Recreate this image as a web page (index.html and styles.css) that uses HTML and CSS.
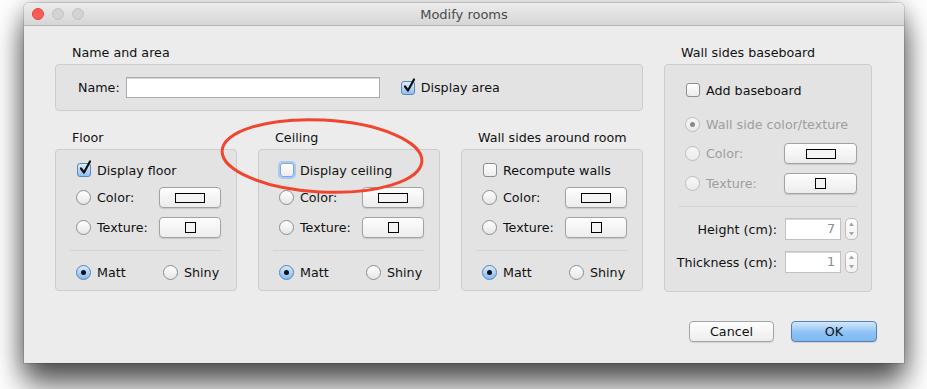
FILE: index.html
```html
<!DOCTYPE html>
<html lang="en">
  <head>
    <meta charset="UTF-8" />
    <title>Modify rooms</title>
    <link rel="stylesheet" href="styles.css">
  </head>
  <body>
    <div class="window">
      <div class="titlebar">
        <div class="lights">
          <span class="light close"></span>
          <span class="light"></span>
          <span class="light"></span>
        </div>
        <div class="title">Modify rooms</div>
        <div></div>
      </div>

      <div class="content">
        <div class="main">
          <div class="left">
            <div class="group">
              <div class="group-title">Name and area</div>
              <div class="box name-box">
                <span class="field-label">Name:</span>
                <div class="text-input name-input"></div>
                <span class="check on">
                  <svg viewBox="0 0 14 16" width="14" height="16"><path d="M3 8.5 L6 12.5 L12 1.5" fill="none" stroke="#111" stroke-width="2.2" stroke-linecap="round" stroke-linejoin="round"/></svg>
                </span>
                <span class="check-text">Display area</span>
              </div>
            </div>

            <div class="trio">
              <div class="group">
                <div class="group-title">Floor</div>
                <div class="box panel">
                  <div class="check-row">
                    <span class="check on">
                      <svg viewBox="0 0 14 16" width="14" height="16"><path d="M3 8.5 L6 12.5 L12 1.5" fill="none" stroke="#111" stroke-width="2.2" stroke-linecap="round" stroke-linejoin="round"/></svg>
                    </span>
                    <span class="check-text">Display floor</span>
                  </div>
                  <div class="option-row">
                    <div class="radio-label"><span class="radio"></span>Color:</div>
                    <div class="swatch"><span class="swatch-rect"></span></div>
                  </div>
                  <div class="option-row">
                    <div class="radio-label"><span class="radio"></span>Texture:</div>
                    <div class="swatch"><span class="swatch-square"></span></div>
                  </div>
                  <div class="separator"></div>
                  <div class="finish-row">
                    <div class="radio-label"><span class="radio on"></span>Matt</div>
                    <div class="radio-label shiny"><span class="radio"></span>Shiny</div>
                  </div>
                </div>
              </div>

              <div class="group">
                <div class="group-title">Ceiling</div>
                <div class="box panel">
                  <div class="check-row">
                    <span class="check focus"></span>
                    <span class="check-text">Display ceiling</span>
                  </div>
                  <div class="option-row">
                    <div class="radio-label"><span class="radio"></span>Color:</div>
                    <div class="swatch"><span class="swatch-rect"></span></div>
                  </div>
                  <div class="option-row">
                    <div class="radio-label"><span class="radio"></span>Texture:</div>
                    <div class="swatch"><span class="swatch-square"></span></div>
                  </div>
                  <div class="separator"></div>
                  <div class="finish-row">
                    <div class="radio-label"><span class="radio on"></span>Matt</div>
                    <div class="radio-label shiny"><span class="radio"></span>Shiny</div>
                  </div>
                </div>
              </div>

              <div class="group">
                <div class="group-title">Wall sides around room</div>
                <div class="box panel">
                  <div class="check-row">
                    <span class="check"></span>
                    <span class="check-text">Recompute walls</span>
                  </div>
                  <div class="option-row">
                    <div class="radio-label"><span class="radio"></span>Color:</div>
                    <div class="swatch"><span class="swatch-rect"></span></div>
                  </div>
                  <div class="option-row">
                    <div class="radio-label"><span class="radio"></span>Texture:</div>
                    <div class="swatch"><span class="swatch-square"></span></div>
                  </div>
                  <div class="separator"></div>
                  <div class="finish-row">
                    <div class="radio-label"><span class="radio on"></span>Matt</div>
                    <div class="radio-label shiny"><span class="radio"></span>Shiny</div>
                  </div>
                </div>
              </div>
            </div>
          </div>

          <div class="group right">
            <div class="group-title">Wall sides baseboard</div>
            <div class="box baseboard">
              <div class="check-row">
                <span class="check"></span>
                <span class="check-text">Add baseboard</span>
              </div>
              <div class="radio-label disabled first"><span class="radio on"></span>Wall side color/texture</div>
              <div class="option-row wide">
                <div class="radio-label disabled"><span class="radio"></span>Color:</div>
                <div class="swatch"><span class="swatch-rect"></span></div>
              </div>
              <div class="option-row wide">
                <div class="radio-label disabled"><span class="radio"></span>Texture:</div>
                <div class="swatch"><span class="swatch-square"></span></div>
              </div>
              <div class="separator"></div>
              <div class="spin-row">
                <span class="spin-label">Height (cm):</span>
                <div class="text-input spin-input">7</div>
                <div class="stepper">
                  <svg viewBox="0 0 11 20" width="11" height="20"><path d="M3 7 L5.5 3.5 L8 7 Z M3 13 L5.5 16.5 L8 13 Z" fill="#a5a5a5"/></svg>
                </div>
              </div>
              <div class="spin-row">
                <span class="spin-label">Thickness (cm):</span>
                <div class="text-input spin-input">1</div>
                <div class="stepper">
                  <svg viewBox="0 0 11 20" width="11" height="20"><path d="M3 7 L5.5 3.5 L8 7 Z M3 13 L5.5 16.5 L8 13 Z" fill="#a5a5a5"/></svg>
                </div>
              </div>
            </div>
          </div>
        </div>

        <div class="footer">
          <button class="btn">Cancel</button>
          <button class="btn default">OK</button>
        </div>
      </div>

      <svg class="highlight" width="230" height="100" viewBox="0 0 230 100">
        <ellipse cx="115" cy="48" rx="100" ry="36" transform="rotate(3 115 48)" fill="none" stroke="#f0452f" stroke-width="3"/>
      </svg>
    </div>
  </body>
</html>
```

FILE: styles.css
```css
html,
body {
  height: 100%;
}
body {
  margin: 0;
  background: #fff;
  font-family: "DejaVu Sans", Verdana, sans-serif;
  font-size: 12.7px;
  color: #111;
  overflow: hidden;
}
.window {
  position: relative;
  margin: 3px 0 0 24px;
  width: 880px;
  height: 360px;
  background: #ececec;
  border-radius: 5px 5px 0 0;
  box-shadow: 0 22px 30px rgba(0, 0, 0, 0.6), 0 4px 24px rgba(0, 0, 0, 0.35), 0 0 0 1px rgba(0, 0, 0, 0.12);
}
.titlebar {
  height: 22px;
  display: grid;
  grid-template-columns: 1fr auto 1fr;
  align-items: center;
  background: linear-gradient(#ececec, #d6d6d6);
  border-bottom: 1px solid #b4b4b4;
  border-radius: 5px 5px 0 0;
}
.lights {
  display: flex;
  gap: 8px;
  padding-left: 8px;
}
.light {
  width: 12px;
  height: 12px;
  box-sizing: border-box;
  border-radius: 50%;
  background: #d3d3d3;
  border: 1px solid #c3c3c3;
}
.light.close {
  background: #fc5b57;
  border-color: #e2463f;
}
.title {
  color: #4b4b4b;
  font-size: 13px;
}
.content {
  padding: 19px 0 0 31px;
}
.main {
  display: flex;
  gap: 21px;
}
.left {
  width: 588px;
}
.right {
  width: 208px;
}
.group-title {
  line-height: 16px;
  margin: 0 0 3px 17px;
}
.box {
  box-sizing: border-box;
  background: #e3e3e3;
  border: 1px solid #cdcdcd;
  border-radius: 4px;
}
.name-box {
  height: 47px;
  display: flex;
  align-items: center;
  padding-left: 22px;
}
.field-label {
  margin-right: 6px;
}
.text-input {
  box-sizing: border-box;
  background: #fff;
  border: 1px solid #ababab;
  box-shadow: inset 0 1px 0 #d8d8d8;
}
.name-input {
  width: 254px;
  height: 21px;
  margin-right: 21px;
}
.check {
  position: relative;
  flex: none;
  width: 14px;
  height: 14px;
  box-sizing: border-box;
  border: 1px solid #8e8e8e;
  border-radius: 3px;
  background: linear-gradient(#fff, #ececec);
}
.check.on {
  border-color: #5f86b6;
  background: linear-gradient(#dcedfd, #8fc0f2);
}
.check svg {
  position: absolute;
  left: 0;
  top: -4px;
}
.check.focus {
  border-color: #7fa8df;
  box-shadow: 0 0 0 2px #a8c8f2;
}
.check-text {
  margin-left: 6px;
}
.trio {
  margin-top: 19px;
  display: grid;
  grid-template-columns: repeat(3, 1fr);
  gap: 21px;
}
.panel {
  padding: 12px 15px 10px 20px;
}
.check-row {
  height: 16px;
  display: flex;
  align-items: center;
  padding-left: 1px;
}
.option-row {
  display: grid;
  grid-template-columns: 1fr 62px;
  align-items: center;
  height: 21px;
  margin-top: 9px;
}
.radio-label {
  display: flex;
  align-items: center;
  height: 16px;
}
.radio {
  position: relative;
  flex: none;
  width: 15px;
  height: 15px;
  box-sizing: border-box;
  margin-right: 6px;
  border-radius: 50%;
  border: 1px solid #8e8e8e;
  background: linear-gradient(#fff, #e6e6e6);
}
.radio.on {
  border-color: #5b82b3;
  background: linear-gradient(#d6eafd, #84b9f1);
}
.radio.on::after {
  content: "";
  position: absolute;
  left: 4px;
  top: 4px;
  width: 5px;
  height: 5px;
  border-radius: 50%;
  background: #111;
}
.swatch {
  height: 21px;
  box-sizing: border-box;
  display: flex;
  align-items: center;
  justify-content: center;
  border: 1px solid #a2a2a2;
  border-radius: 4px;
  background: linear-gradient(#fefefe, #ececec);
  box-shadow: 0 1px 1px rgba(0, 0, 0, 0.12);
}
.swatch-rect {
  width: 30px;
  height: 10px;
  box-sizing: border-box;
  border: 1px solid #000;
  background: #f4f4f4;
}
.swatch-square {
  width: 11px;
  height: 11px;
  box-sizing: border-box;
  border: 1px solid #000;
  background: #f4f4f4;
}
.separator {
  height: 1px;
  background: #d4d4d4;
  margin: 12px -1px 0 -6px;
}
.finish-row {
  display: grid;
  grid-template-columns: 1fr 62px;
  margin-top: 13px;
}
.shiny {
  padding-left: 4px;
}
.baseboard {
  height: 228px;
  padding: 17px 14px 0 20px;
}
.baseboard .first {
  margin-top: 18px;
}
.option-row.wide {
  grid-template-columns: 1fr 73px;
}
.baseboard .option-row:nth-of-type(3) {
  margin-top: 11px;
}
.disabled {
  color: #9e9e9e;
}
.disabled .radio {
  border-color: #bdbdbd;
  background: linear-gradient(#f7f7f7, #ebebeb);
}
.disabled .radio.on::after {
  background: #8a8a8a;
}
.baseboard .separator {
  margin: 12px -1px 0 -7px;
}
.spin-row {
  display: flex;
  align-items: center;
  margin: 11px -1px 0 -10px;
}
.spin-label {
  flex: 1;
  text-align: right;
  white-space: nowrap;
  margin-right: 8px;
}
.spin-input {
  flex: none;
  width: 56px;
  height: 22px;
  line-height: 20px;
  text-align: right;
  padding-right: 5px;
  color: #8c8c8c;
  border-color: #c2c2c2;
}
.stepper {
  flex: none;
  margin-left: 4px;
  width: 13px;
  height: 22px;
  box-sizing: border-box;
  display: flex;
  align-items: center;
  justify-content: center;
  border: 1px solid #bdbdbd;
  border-radius: 5px;
  background: linear-gradient(#fff, #f0f0f0);
}
.footer {
  display: flex;
  justify-content: flex-end;
  gap: 17px;
  margin-top: 29px;
  padding-right: 27px;
}
.btn {
  width: 85px;
  height: 21px;
  padding: 0;
  font: inherit;
  color: #111;
  border: 1px solid #a4a4a4;
  border-radius: 4px;
  background: linear-gradient(#fefefe, #ededed);
  box-shadow: 0 1px 1px rgba(0, 0, 0, 0.1);
}
.btn.default {
  width: 86px;
  border-color: #5c7fae;
  background: linear-gradient(#d3e8fd, #8ec2f5 55%, #7eb8f3);
}
.highlight {
  position: absolute;
  left: 183px;
  top: 105px;
  overflow: visible;
}
```
